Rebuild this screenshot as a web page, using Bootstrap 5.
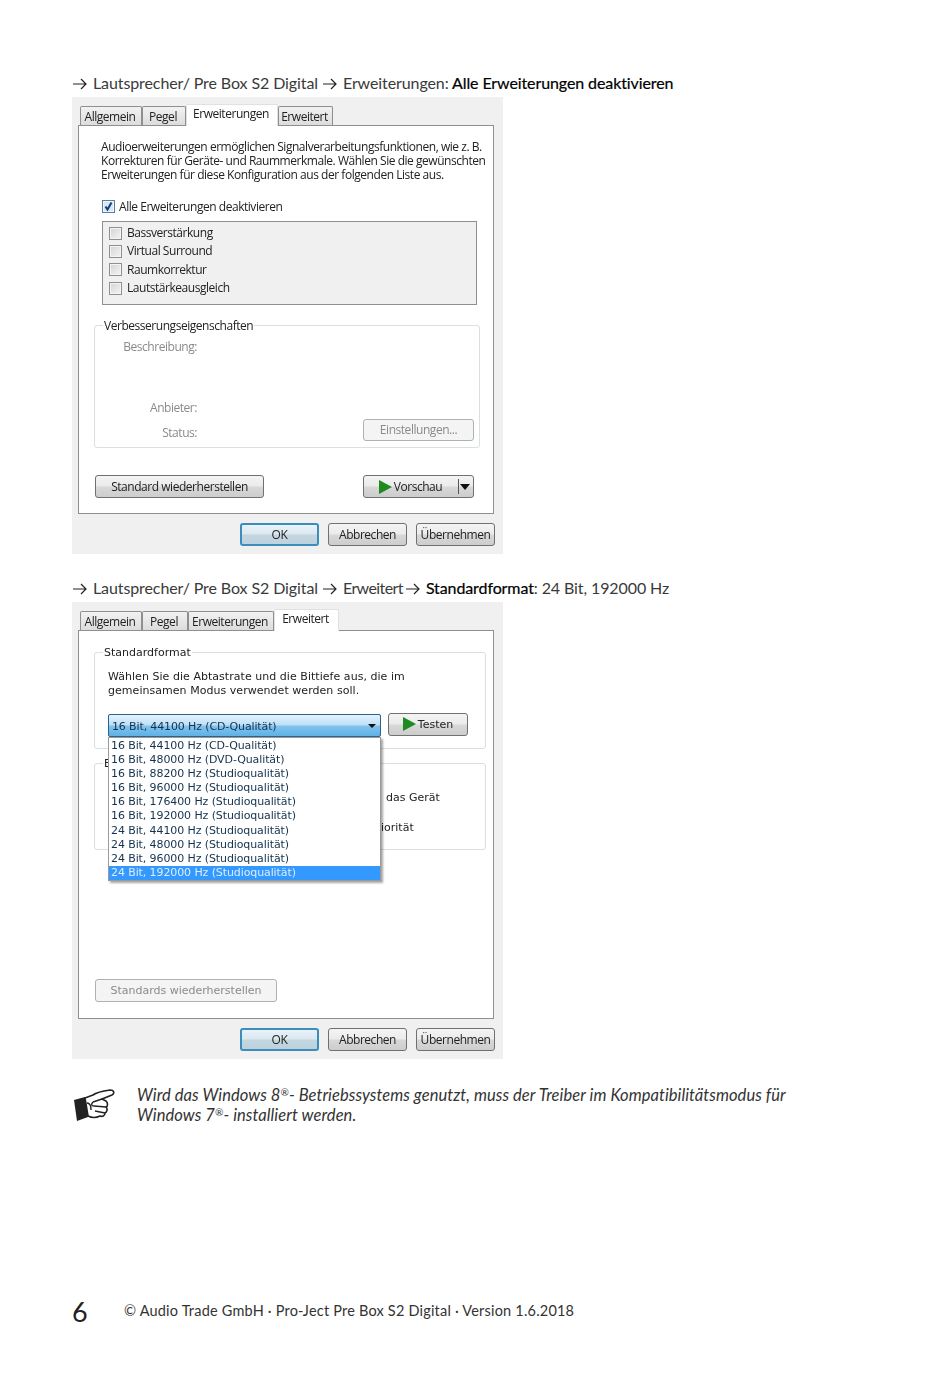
<!DOCTYPE html>
<html lang="de">
<head>
    <meta charset="UTF-8">
    <meta name="viewport" content="width=device-width, initial-scale=1.0">
    <title>Pro-Ject Pre Box S2 Digital</title>
    <link rel="stylesheet" href="https://cdn.jsdelivr.net/npm/bootstrap@5.3.0/dist/css/bootstrap.min.css">
    <style>
        body { background: #fff; color: #333; font-family: "Lato", "Liberation Sans", sans-serif; }
        .manual-page { padding: 74px 0 0 72px; width: 950px; height: 1376px; overflow: hidden; }
        .step-line { height: 20px; line-height: 18px; font-size: 16px; white-space: nowrap; letter-spacing: -.1px; color: #3a3a3a; }
        .step-line svg { width: 16px; height: 12px; margin: 0 1px 0 0; vertical-align: -1px; }
        .step-line strong { font-weight: 400; color: #000; -webkit-text-stroke: .2px #000; }
        .step-second { margin-top: 25px; }
        .step-tight { letter-spacing: -.6px; margin-right: -2px; }

        .win-dialog { width: 431px; height: 457px; margin-top: 3px; padding: 7px 0 0 6px; background: #f0f0f0; color: #222; font-family: "Open Sans", "Liberation Sans", sans-serif; font-size: 12px; letter-spacing: -.46px; filter: blur(.35px); }
        .win-tabs { height: 21px; padding-left: 2px; border: 0; align-items: flex-end; flex-wrap: nowrap; }
        .win-tabs .nav-link { height: 19px; padding: 0 2px 0 0; margin: 0; line-height: 19px; text-align: center; color: #222; background: linear-gradient(#f2f2f2, #dcdcdc); border: 1px solid #8e8f8f; border-bottom: 0; border-radius: 2px 2px 0 0; font-size: 12px; }
        .win-tabs .nav-link.active { height: 22px; margin-bottom: -1px; line-height: 17px; background: #fff; color: #222; position: relative; z-index: 1; }
        .win-panel { width: 416px; height: 389px; background: #fff; border: 1px solid #8e8f8f; }
        .win-foot { padding: 9px 8px 0 0; gap: 9px; }

        .win-btn { height: 23px; padding: 0; line-height: 20px; font-size: 12px; letter-spacing: -.46px; color: #222; border: 1px solid #707070; border-radius: 3px; background: linear-gradient(#f4f4f4 0, #ebebeb 48%, #d8d8d8 52%, #cdcdcd 100%); }
        .win-btn:disabled { color: #8a8a8a; opacity: 1; border-color: #adb2b5; background: #f4f4f4; }
        .win-btn-foot { width: 79px; }
        .win-btn-default { border: 2px solid #3c8dbb; line-height: 19px; background: linear-gradient(#e9f3f8 0, #dbe8ef 48%, #c4d6e0 52%, #bdd2de 100%); }
        .play-mark { display: inline-block; width: 0; height: 0; border-left: 13px solid #1f8a1f; border-top: 7px solid transparent; border-bottom: 7px solid transparent; vertical-align: -3px; margin-right: 2px; }

        .desc-text { margin: 14px 0 0 22px; line-height: 14px; white-space: nowrap; }
        .check-row { height: 14px; margin: 18px 0 0 23px; line-height: 14px; gap: 4px; }
        .win-check { width: 13px; height: 13px; flex: none; border: 1px solid #8e8f8f; background: linear-gradient(135deg, #d4d4d4, #f4f4f4); box-shadow: inset 0 0 0 1px #f4f4f4; }
        .win-check-on { border-color: #5a7fa5; background: #d6e8f7; color: #123e78; }
        .win-check-on svg { display: block; width: 11px; height: 11px; }
        .option-box { width: 375px; height: 84px; margin: 7px 0 0 23px; padding: 2px 0 0 6px; background: #f0f0f0; border: 1px solid #8e8f8f; }
        .option-row { height: 18.3px; gap: 5px; line-height: 18px; }

        .win-group { position: relative; margin: 20px 0 0 15px; border: 1px solid #dcdfe1; border-radius: 3px; }
        .group-title { position: absolute; top: -7px; left: 8px; padding: 0 1px; height: 14px; line-height: 14px; background: #fff; }
        .props-group { width: 386px; height: 123px; padding-top: 14px; }
        .muted-label { width: 102px; height: 14px; line-height: 14px; text-align: right; color: #8a8a8a; }
        .label-gap { margin-top: 47px; }
        .status-row { margin: 4px 5px 0 0; }
        .status-row .muted-label { margin-bottom: 1px; }
        .settings-btn { width: 111px; height: 22px; }
        .bottom-row { margin: 27px 19px 0 16px; }
        .restore-btn { width: 169px; }
        .preview-btn { width: 111px; position: relative; padding-right: 16px; }
        .preview-split { position: absolute; top: 3px; right: 14px; bottom: 3px; border-left: 1px solid #555; }
        .preview-arrow { position: absolute; top: 8px; right: 3px; border-top: 6px solid #111; border-left: 5px solid transparent; border-right: 5px solid transparent; }

        .verdana-look { font-family: "DejaVu Sans", "Liberation Sans", sans-serif; font-size: 11px; letter-spacing: 0; }
        .verdana-look .win-tabs .nav-link, .verdana-look .win-btn-foot { font-family: "Open Sans", sans-serif; font-size: 12px; letter-spacing: -.46px; }
        .format-group { width: 392px; height: 97px; margin-top: 21px; padding: 17px 0 0 13px; }
        .format-text { line-height: 14px; white-space: nowrap; letter-spacing: .04px; }
        .format-row { margin-top: 15px; gap: 7px; align-items: flex-start; }
        .format-select { position: relative; width: 273px; height: 23px; margin-top: 1px; padding-left: 3px; line-height: 24px; color: #14324e; letter-spacing: -.13px; border: 1px solid #2c628b; border-radius: 2px; background: linear-gradient(#e3f3fd 0, #bfe1f7 45%, #7fc2ee 55%, #5fb1e6 100%); }
        .format-select-arrow { position: absolute; top: 9px; right: 4px; border-top: 4px solid #111; border-left: 4px solid transparent; border-right: 4px solid transparent; }
        .format-menu { position: absolute; z-index: 2; top: 22px; left: -1px; width: 273px; padding: 1px 0 0; background: #fff; border: 1px solid #9a9a9a; box-shadow: 2px 2px 2px rgba(0,0,0,.35); letter-spacing: -.1px; }
        .format-option { height: 14.1px; line-height: 14px; padding-left: 2px; white-space: nowrap; }
        .format-option-on { background: #3399ff; color: #dcecff; }
        .test-btn { width: 80px; line-height: 22px; font-family: "DejaVu Sans", sans-serif; font-size: 11px; letter-spacing: 0; }
        .exclusive-group { width: 392px; height: 87px; margin-top: 14px; }
        .rest-text { height: 14px; line-height: 14px; white-space: nowrap; }
        .rest-one { margin: 27px 0 0 291px; }
        .rest-two { margin: 16px 0 0 286px; }
        .defaults-btn { display: block; width: 182px; margin: 129px 0 0 16px; line-height: 22px; font-family: "DejaVu Sans", sans-serif; font-size: 11px; letter-spacing: 0; }

        .note-row { margin-top: 26px; gap: 22px; }
        .note-hand { width: 42px; height: 34px; flex: none; margin: 4px 0 0 1px; }
        .note-text { font-style: italic; font-size: 16.5px; line-height: 20px; color: #333; letter-spacing: .07px; }
        .note-text sup { font-size: 10px; top: -.5em; }
        .page-foot { margin-top: 172px; align-items: center; height: 30px; }
        .page-num { width: 52px; font-size: 27px; line-height: 30px; color: #222; }
        .page-credit { font-size: 14.5px; color: #333; letter-spacing: .2px; margin-bottom: 2px; }
    </style>
</head>
<body>
    <div class="manual-page">
        <div class="step-line">
            <svg viewBox="0 0 16 12"><path d="M1 6h13M9 1l5 5-5 5" fill="none" stroke="#222" stroke-width="1.2"/></svg>
            Lautsprecher/ Pre Box S2 Digital
            <svg viewBox="0 0 16 12"><path d="M1 6h13M9 1l5 5-5 5" fill="none" stroke="#222" stroke-width="1.2"/></svg>
            Erweiterungen: <strong>Alle Erweiterungen deaktivieren</strong>
        </div>

        <div class="win-dialog">
            <ul class="nav nav-tabs win-tabs">
                <li class="nav-item"><a class="nav-link" style="width:62px">Allgemein</a></li>
                <li class="nav-item"><a class="nav-link" style="width:44px">Pegel</a></li>
                <li class="nav-item"><a class="nav-link active" style="width:92px">Erweiterungen</a></li>
                <li class="nav-item"><a class="nav-link" style="width:55px">Erweitert</a></li>
            </ul>
            <div class="win-panel">
                <div class="desc-text">
                    Audioerweiterungen ermöglichen Signalverarbeitungsfunktionen, wie z. B.<br>
                    Korrekturen für Geräte- und Raummerkmale. Wählen Sie die gewünschten<br>
                    Erweiterungen für diese Konfiguration aus der folgenden Liste aus.
                </div>
                <div class="check-row d-flex">
                    <span class="win-check win-check-on"><svg viewBox="0 0 11 11"><path d="M2.5 5.5l2 3 4-7" fill="none" stroke="currentColor" stroke-width="2"/></svg></span>
                    Alle Erweiterungen deaktivieren
                </div>
                <div class="option-box">
                    <div class="option-row d-flex align-items-center"><span class="win-check"></span>Bassverstärkung</div>
                    <div class="option-row d-flex align-items-center"><span class="win-check"></span>Virtual Surround</div>
                    <div class="option-row d-flex align-items-center"><span class="win-check"></span>Raumkorrektur</div>
                    <div class="option-row d-flex align-items-center"><span class="win-check"></span>Lautstärkeausgleich</div>
                </div>
                <div class="win-group props-group">
                    <div class="group-title">Verbesserungseigenschaften</div>
                    <div class="muted-label">Beschreibung:</div>
                    <div class="muted-label label-gap">Anbieter:</div>
                    <div class="status-row d-flex justify-content-between align-items-end">
                        <div class="muted-label">Status:</div>
                        <button class="btn win-btn settings-btn" disabled>Einstellungen...</button>
                    </div>
                </div>
                <div class="bottom-row d-flex justify-content-between">
                    <button class="btn win-btn restore-btn">Standard wiederherstellen</button>
                    <button class="btn win-btn preview-btn"><span class="play-mark"></span>Vorschau<span class="preview-split"></span><span class="preview-arrow"></span></button>
                </div>
            </div>
            <div class="win-foot d-flex justify-content-end">
                <button class="btn win-btn win-btn-foot win-btn-default">OK</button>
                <button class="btn win-btn win-btn-foot">Abbrechen</button>
                <button class="btn win-btn win-btn-foot">Übernehmen</button>
            </div>
        </div>

        <div class="step-line step-second">
            <svg viewBox="0 0 16 12"><path d="M1 6h13M9 1l5 5-5 5" fill="none" stroke="#222" stroke-width="1.2"/></svg>
            Lautsprecher/ Pre Box S2 Digital
            <svg viewBox="0 0 16 12"><path d="M1 6h13M9 1l5 5-5 5" fill="none" stroke="#222" stroke-width="1.2"/></svg>
            <span class="step-tight">Erweitert</span>
            <svg viewBox="0 0 16 12"><path d="M1 6h13M9 1l5 5-5 5" fill="none" stroke="#222" stroke-width="1.2"/></svg>
            <strong>Standardformat</strong>: 24 Bit, 192000 Hz
        </div>

        <div class="win-dialog verdana-look">
            <ul class="nav nav-tabs win-tabs">
                <li class="nav-item"><a class="nav-link" style="width:62px">Allgemein</a></li>
                <li class="nav-item"><a class="nav-link" style="width:46px">Pegel</a></li>
                <li class="nav-item"><a class="nav-link" style="width:86px">Erweiterungen</a></li>
                <li class="nav-item"><a class="nav-link active" style="width:65px">Erweitert</a></li>
            </ul>
            <div class="win-panel">
                <div class="win-group format-group">
                    <div class="group-title">Standardformat</div>
                    <div class="format-text">Wählen Sie die Abtastrate und die Bittiefe aus, die im<br>gemeinsamen Modus verwendet werden soll.</div>
                    <div class="format-row d-flex">
                        <div class="format-select">
                            16 Bit, 44100 Hz (CD-Qualität)
                            <span class="format-select-arrow"></span>
                            <div class="format-menu" id="formatMenu"></div>
                        </div>
                        <button class="btn win-btn test-btn"><span class="play-mark"></span>Testen</button>
                    </div>
                </div>
                <div class="win-group exclusive-group">
                    <div class="group-title">E</div>
                    <div class="rest-text rest-one">das Gerät</div>
                    <div class="rest-text rest-two">iorität</div>
                </div>
                <button class="btn win-btn defaults-btn" disabled>Standards wiederherstellen</button>
            </div>
            <div class="win-foot d-flex justify-content-end">
                <button class="btn win-btn win-btn-foot win-btn-default">OK</button>
                <button class="btn win-btn win-btn-foot">Abbrechen</button>
                <button class="btn win-btn win-btn-foot">Übernehmen</button>
            </div>
        </div>

        <div class="note-row d-flex">
            <svg class="note-hand" viewBox="0 0 42 34">
                <path d="M1 11l11-3 3 20-11 4z" fill="#222"/>
                <path d="M12 9l8-3c4-3 10-4 17-5 4 0 5 3 2 5l-10 4 4 2c2 2 2 5 0 6 2 2 1 5-1 6 0 3-3 4-5 3-4 2-8 2-12 0z" fill="#fff" stroke="#222" stroke-width="1.6" stroke-linejoin="round"/>
                <path d="M20 13l9-3M20 13c-2 2-2 4 1 4l12 1M22 22l10 2M14 14c3 0 4 4 4 7" fill="none" stroke="#222" stroke-width="1.4"/>
            </svg>
            <div class="note-text">Wird das Windows 8<sup>®</sup>- Betriebssystems genutzt, muss der Treiber im Kompatibilitätsmodus für<br>Windows 7<sup>®</sup>- installiert werden.</div>
        </div>

        <div class="page-foot d-flex">
            <div class="page-num">6</div>
            <div class="page-credit">© Audio Trade GmbH · Pro-Ject Pre Box S2 Digital · Version 1.6.2018</div>
        </div>
    </div>

    <script src="https://cdn.jsdelivr.net/npm/bootstrap@5.3.0/dist/js/bootstrap.bundle.min.js"></script>
    <script>
        const formats = [
            '16 Bit, 44100 Hz (CD-Qualität)',
            '16 Bit, 48000 Hz (DVD-Qualität)',
            '16 Bit, 88200 Hz (Studioqualität)',
            '16 Bit, 96000 Hz (Studioqualität)',
            '16 Bit, 176400 Hz (Studioqualität)',
            '16 Bit, 192000 Hz (Studioqualität)',
            '24 Bit, 44100 Hz (Studioqualität)',
            '24 Bit, 48000 Hz (Studioqualität)',
            '24 Bit, 96000 Hz (Studioqualität)',
            '24 Bit, 192000 Hz (Studioqualität)'
        ];
        document.getElementById('formatMenu').innerHTML = formats.map((f, i) =>
            `<div class="format-option${i === formats.length - 1 ? ' format-option-on' : ''}">${f}</div>`
        ).join('');
    </script>
</body>
</html>
